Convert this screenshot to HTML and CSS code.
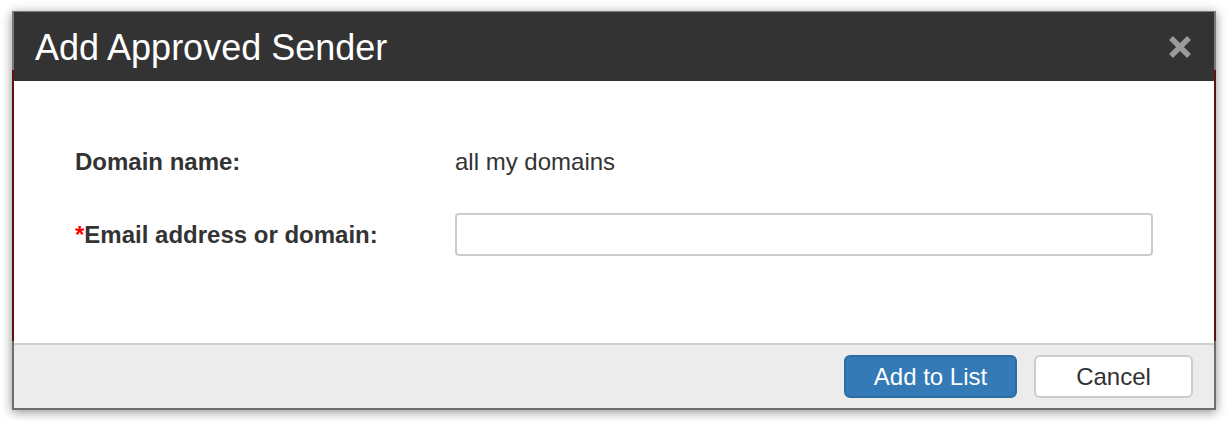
FILE: index.html
```html
<!DOCTYPE html>
<html lang="en">
<head>
    <meta charset="UTF-8">
    <title>Add Approved Sender</title>
    <link rel="stylesheet" href="styles.css">
</head>
<body>

    <div class="janela">
        <div class="cabecalho">
            <h1>Add Approved Sender</h1>
            <button class="fechar" aria-label="Close">
                <svg width="24" height="24" viewBox="0 0 24 24">
                    <path d="M3 3 L21 21 M21 3 L3 21" stroke="#9b9b9b" stroke-width="5.5" fill="none"/>
                </svg>
            </button>
        </div>

        <div class="conteudo">
            <div class="rotulo">Domain name:</div>
            <div class="valor">all my domains</div>

            <label class="rotulo" for="email"><span class="obrigatorio">*</span>Email address or domain:</label>
            <input type="text" id="email" class="campo">
        </div>

        <div class="rodape">
            <button class="botao primario">Add to List</button>
            <button class="botao">Cancel</button>
        </div>
    </div>

</body>
</html>
```

FILE: styles.css
```css
* {
    margin: 0;
    padding: 0;
    box-sizing: border-box;
}

body {
    background: #fff;
    font-family: 'Liberation Sans', Arial, sans-serif;
    color: #333;
    padding: 11px 12px;
}

.janela {
    width: 1204px;
    padding: 1px 2px 2px;
    background: linear-gradient(to bottom, #7a7a7a 0, #7a7a7a 59px, #5e1212 59px, #5e1212 330px, #6e6e6e 330px);
    box-shadow: 0 2px 10px rgba(0, 0, 0, 0.45);
}

.cabecalho {
    height: 69px;
    background: #333;
    display: flex;
    align-items: center;
    justify-content: space-between;
    padding: 0 22px 0 21px;
}

.cabecalho h1 {
    color: #fff;
    font-size: 36px;
    font-weight: normal;
    line-height: 1;
    margin-top: 2px;
}

.fechar {
    background: none;
    border: none;
    width: 24px;
    height: 24px;
    display: flex;
    cursor: pointer;
}

.conteudo {
    background: #fff;
    display: grid;
    grid-template-columns: 380px 1fr;
    grid-template-rows: 43px 43px;
    row-gap: 30px;
    align-items: center;
    padding: 59px 61px 87px;
    font-size: 24px;
}

.rotulo {
    font-weight: bold;
}

.obrigatorio {
    color: #f00;
}

.campo {
    height: 43px;
    width: 100%;
    border: 2px solid #ccc;
    border-radius: 4px;
    font-size: 24px;
    padding: 0 12px;
}

.rodape {
    background: #ececec;
    border-top: 2px solid #cfcfcf;
    height: 65px;
    display: flex;
    justify-content: flex-end;
    align-items: center;
    gap: 17px;
    padding: 0 21px;
}

.botao {
    height: 43px;
    width: 159px;
    border: 2px solid #ccc;
    border-radius: 6px;
    background: #fff;
    color: #333;
    font-family: inherit;
    font-size: 24px;
    cursor: pointer;
}

.primario {
    width: 173px;
    background: #337ab7;
    border-color: #2e6da4;
    color: #fff;
}
```
